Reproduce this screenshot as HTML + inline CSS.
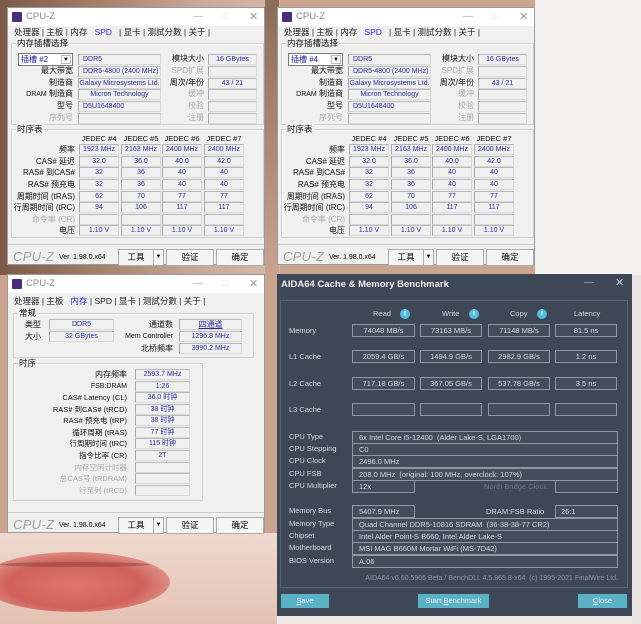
<!DOCTYPE html>
<html><head><meta charset="utf-8">
<style>
*{margin:0;padding:0;box-sizing:border-box}
body{width:641px;height:624px;position:relative;overflow:hidden;background:#c9a48f;font-family:"Liberation Sans","Noto Sans CJK SC",sans-serif}
.a{position:absolute;white-space:nowrap}
.w{position:absolute;background:#f0f0f0;border:1px solid #9a9a9a;width:258px;height:258px;font-size:8px;color:#000}
.tb{position:absolute;left:0;top:0;width:100%;height:18px;background:#fff}
.ic{position:absolute;left:4px;top:4px;width:10px;height:10px;background:#4a2c7c;border-radius:1px}
.tt{left:18px;top:3px;font-size:9.5px;color:#888}
.tab{top:18px;font-size:8.5px;line-height:12px;color:#222}
.g{position:absolute;border:1px solid #cfcfcf;box-shadow:1px 1px 0 #fff inset}
.gl{font-size:8.5px;line-height:11px;background:#f0f0f0;padding:0 1px;color:#111}
.lb{text-align:right;font-size:8px;line-height:11px;color:#111;overflow:hidden}
.gr{color:#aaa}
.bx{position:absolute;height:11px;background:#f0f0f0;border:1px solid #d8d8d8;border-left-color:#a8a8a8;border-top-color:#b8b8b8;font-size:7px;line-height:9px;color:#2a2a9c;text-align:center;white-space:nowrap;overflow:hidden}
.bl{text-align:left;padding-left:4px}
.hd{font-size:7.5px;text-align:center;width:40px;color:#111}
.cz{font-size:13px;font-style:italic;color:#a0a0a0;letter-spacing:0.3px}
.btn{position:absolute;top:241px;height:17px;border:1px solid #adadad;background:#f5f5f5;font-size:8.5px;text-align:center;line-height:15px}
.ad{position:absolute;left:277px;top:274px;width:355px;height:342px;background:#3d4756;color:#d6dbe2;font-size:7.5px}
.ab{position:absolute;height:13px;border:1px solid #8e97a4;background:#434d5c;text-align:center;line-height:11px;font-size:7.5px;color:#d6dbe2;white-space:nowrap}
.ar{position:absolute;left:75px;width:266px;height:13px;border:1px solid #8e97a4;background:#434d5c;line-height:11px;padding-left:6px;font-size:7.5px;white-space:nowrap}
.al{position:absolute;left:12px;font-size:7.5px;color:#d6dbe2;white-space:nowrap}
.ib{position:absolute;width:10px;height:10px;border-radius:50%;background:#55bedc;color:#fff;font-size:7px;text-align:center;line-height:10px;font-weight:bold}
.abtn{position:absolute;top:320px;height:14px;background:#5bb2c6;color:#eef;font-size:7.5px;text-align:center;line-height:14px}
</style></head><body>
<div class="a" style="left:0;top:0;width:280px;height:275px;background:linear-gradient(90deg,#7a5a46,#a88670 40%,#c8a898 70%,#d7b8a6)"></div>
<div class="a" style="left:535px;top:0;width:106px;height:275px;background:#f3f1f0"></div>
<div class="a" style="left:265px;top:0;width:14px;height:275px;background:linear-gradient(#8b6d5a,#c9a390)"></div>
<div class="a" style="left:0;top:533px;width:277px;height:91px;background:linear-gradient(#efd9cf,#e4c2b2)"></div>
<div class="a" style="left:-20px;top:552px;width:190px;height:60px;border-radius:50%;background:radial-gradient(ellipse at 50% 55%,#e0766c,#d0615a 50%,#e3a094 80%,transparent 100%)"></div>
<div class="a" style="left:0;top:562px;width:150px;height:5px;background:#8a4040;border-radius:50%;opacity:.5"></div>
<div class="a" style="left:632px;top:275px;width:9px;height:349px;background:#e9e4e2"></div>
<div class="a" style="left:277px;top:616px;width:355px;height:8px;background:#efe9e6"></div>

<!-- CPU-Z window 1 -->
<div class="w" style="left:7px;top:7px">
<div class="tb"></div><div class="ic"></div><div class="a tt">CPU-Z</div>
<div class="a" style="left:185px;top:3px;color:#aaa;font-size:10px">—</div><div class="a" style="left:214px;top:3px;color:#ddd;font-size:10px">□</div><div class="a" style="left:241px;top:2px;color:#999;font-size:11px">✕</div>
<div class="a tab" style="left:6px">处理器 | 主板 | 内存 &nbsp;&nbsp;<span style="color:#2a2ad0">SPD</span>&nbsp;&nbsp; | 显卡 | 测試分數 | 关于 |</div>
<div class="g" style="left:3px;top:35px;width:253px;height:82px"></div><div class="a gl" style="left:8px;top:30px">内存插槽选择</div>
<div class="a" style="left:10px;top:45px;width:55px;height:13px;background:#fff;border:1px solid #7a7a7a;font-size:8px;line-height:11px;padding-left:2px;color:#1a1a9a">插槽 #2<span style="position:absolute;right:1px;top:1px;width:10px;height:9px;border:1px solid #bbb;font-size:6px;text-align:center;line-height:8px;color:#000">▼</span></div>
<div class="a lb" style="left:0;width:65px;top:57px">最大带宽</div>
<div class="a lb" style="left:0;width:65px;top:69px">制造商</div>
<div class="a lb" style="left:0;width:65px;top:80px"><span style="font-size:7px">DRAM</span> 制造商</div>
<div class="a lb" style="left:0;width:65px;top:92px">型号</div>
<div class="a lb gr" style="left:0;width:65px;top:104px">序列号</div>
<div class="bx bl" style="left:70px;width:83px;top:46px">DDR5</div>
<div class="bx bl" style="left:70px;width:83px;top:58px">DDR5-4800 (2400 MHz)</div>
<div class="bx" style="left:70px;width:83px;top:70px">Galaxy Microsystems Ltd.</div>
<div class="bx" style="left:70px;width:83px;top:81px">Micron Technology</div>
<div class="bx bl" style="left:70px;width:83px;top:93px">D5U1648400</div>
<div class="bx" style="left:70px;width:83px;top:105px"></div>
<div class="a lb" style="left:140px;width:56px;top:45px">模块大小</div>
<div class="a lb gr" style="left:140px;width:56px;top:57px">SPD扩展</div>
<div class="a lb" style="left:140px;width:56px;top:69px">周次/年份</div>
<div class="a lb gr" style="left:140px;width:56px;top:80px">缓冲</div>
<div class="a lb gr" style="left:140px;width:56px;top:92px">校验</div>
<div class="a lb gr" style="left:140px;width:56px;top:104px">注册</div>
<div class="bx" style="left:200px;width:49px;top:46px">16 GBytes</div>
<div class="bx" style="left:200px;width:49px;top:58px"></div>
<div class="bx" style="left:200px;width:49px;top:70px">43 / 21</div>
<div class="bx" style="left:200px;width:49px;top:81px"></div>
<div class="bx" style="left:200px;width:49px;top:93px"></div>
<div class="bx" style="left:200px;width:49px;top:105px"></div>
<div class="g" style="left:3px;top:121px;width:253px;height:109px"></div><div class="a gl" style="left:8px;top:116px">时序表</div>
<div class="a hd" style="left:71px;top:126px">JEDEC #4</div><div class="a hd" style="left:113px;top:126px">JEDEC #5</div><div class="a hd" style="left:154px;top:126px">JEDEC #6</div><div class="a hd" style="left:196px;top:126px">JEDEC #7</div>
<div class="a lb" style="left:0;width:67px;top:136px">频率</div>
<div class="a lb" style="left:0;width:67px;top:148px">CAS# 延迟</div>
<div class="a lb" style="left:0;width:67px;top:159px">RAS# 到CAS#</div>
<div class="a lb" style="left:0;width:67px;top:171px">RAS# 预充电</div>
<div class="a lb" style="left:0;width:67px;top:183px">周期时间 (tRAS)</div>
<div class="a lb" style="left:0;width:67px;top:194px">行周期时间 (tRC)</div>
<div class="a lb gr" style="left:0;width:67px;top:206px">命令率 (CR)</div>
<div class="a lb" style="left:0;width:67px;top:217px">电压</div>
<div class="bx" style="left:71px;width:40px;top:136px">1923 MHz</div><div class="bx" style="left:113px;width:40px;top:136px">2163 MHz</div><div class="bx" style="left:154px;width:40px;top:136px">2400 MHz</div><div class="bx" style="left:196px;width:40px;top:136px">2400 MHz</div>
<div class="bx" style="left:71px;width:40px;top:148px">32.0</div><div class="bx" style="left:113px;width:40px;top:148px">36.0</div><div class="bx" style="left:154px;width:40px;top:148px">40.0</div><div class="bx" style="left:196px;width:40px;top:148px">42.0</div>
<div class="bx" style="left:71px;width:40px;top:159px">32</div><div class="bx" style="left:113px;width:40px;top:159px">36</div><div class="bx" style="left:154px;width:40px;top:159px">40</div><div class="bx" style="left:196px;width:40px;top:159px">40</div>
<div class="bx" style="left:71px;width:40px;top:171px">32</div><div class="bx" style="left:113px;width:40px;top:171px">36</div><div class="bx" style="left:154px;width:40px;top:171px">40</div><div class="bx" style="left:196px;width:40px;top:171px">40</div>
<div class="bx" style="left:71px;width:40px;top:183px">62</div><div class="bx" style="left:113px;width:40px;top:183px">70</div><div class="bx" style="left:154px;width:40px;top:183px">77</div><div class="bx" style="left:196px;width:40px;top:183px">77</div>
<div class="bx" style="left:71px;width:40px;top:194px">94</div><div class="bx" style="left:113px;width:40px;top:194px">106</div><div class="bx" style="left:154px;width:40px;top:194px">117</div><div class="bx" style="left:196px;width:40px;top:194px">117</div>
<div class="bx" style="left:71px;width:40px;top:206px"></div><div class="bx" style="left:113px;width:40px;top:206px"></div><div class="bx" style="left:154px;width:40px;top:206px"></div><div class="bx" style="left:196px;width:40px;top:206px"></div>
<div class="bx" style="left:71px;width:40px;top:217px">1.10 V</div><div class="bx" style="left:113px;width:40px;top:217px">1.10 V</div><div class="bx" style="left:154px;width:40px;top:217px">1.10 V</div><div class="bx" style="left:196px;width:40px;top:217px">1.10 V</div>
<div class="a" style="left:0;top:236px;width:256px;height:1px;background:#ccc"></div>
<div class="a cz" style="left:5px;top:241px">CPU-Z</div><div class="a" style="left:51px;top:246px;font-size:7px">Ver. 1.98.0.x64</div>
<div class="btn" style="left:110px;width:36px">工具</div><div class="btn" style="left:145px;width:11px;font-size:6px">▼</div>
<div class="btn" style="left:158px;width:48px">验证</div><div class="btn" style="left:208px;width:48px">确定</div>
</div>

<!-- CPU-Z window 2 -->
<div class="w" style="left:277px;top:7px">
<div class="tb"></div><div class="ic"></div><div class="a tt">CPU-Z</div>
<div class="a" style="left:185px;top:3px;color:#aaa;font-size:10px">—</div><div class="a" style="left:214px;top:3px;color:#ddd;font-size:10px">□</div><div class="a" style="left:241px;top:2px;color:#999;font-size:11px">✕</div>
<div class="a tab" style="left:6px">处理器 | 主板 | 内存 &nbsp;&nbsp;<span style="color:#2a2ad0">SPD</span>&nbsp;&nbsp; | 显卡 | 测試分數 | 关于 |</div>
<div class="g" style="left:3px;top:35px;width:253px;height:82px"></div><div class="a gl" style="left:8px;top:30px">内存插槽选择</div>
<div class="a" style="left:10px;top:45px;width:55px;height:13px;background:#fff;border:1px solid #7a7a7a;font-size:8px;line-height:11px;padding-left:2px;color:#1a1a9a">插槽 #4<span style="position:absolute;right:1px;top:1px;width:10px;height:9px;border:1px solid #bbb;font-size:6px;text-align:center;line-height:8px;color:#000">▼</span></div>
<div class="a lb" style="left:0;width:65px;top:57px">最大带宽</div>
<div class="a lb" style="left:0;width:65px;top:69px">制造商</div>
<div class="a lb" style="left:0;width:65px;top:80px"><span style="font-size:7px">DRAM</span> 制造商</div>
<div class="a lb" style="left:0;width:65px;top:92px">型号</div>
<div class="a lb gr" style="left:0;width:65px;top:104px">序列号</div>
<div class="bx bl" style="left:70px;width:83px;top:46px">DDR5</div>
<div class="bx bl" style="left:70px;width:83px;top:58px">DDR5-4800 (2400 MHz)</div>
<div class="bx" style="left:70px;width:83px;top:70px">Galaxy Microsystems Ltd.</div>
<div class="bx" style="left:70px;width:83px;top:81px">Micron Technology</div>
<div class="bx bl" style="left:70px;width:83px;top:93px">D5U1648400</div>
<div class="bx" style="left:70px;width:83px;top:105px"></div>
<div class="a lb" style="left:140px;width:56px;top:45px">模块大小</div>
<div class="a lb gr" style="left:140px;width:56px;top:57px">SPD扩展</div>
<div class="a lb" style="left:140px;width:56px;top:69px">周次/年份</div>
<div class="a lb gr" style="left:140px;width:56px;top:80px">缓冲</div>
<div class="a lb gr" style="left:140px;width:56px;top:92px">校验</div>
<div class="a lb gr" style="left:140px;width:56px;top:104px">注册</div>
<div class="bx" style="left:200px;width:49px;top:46px">16 GBytes</div>
<div class="bx" style="left:200px;width:49px;top:58px"></div>
<div class="bx" style="left:200px;width:49px;top:70px">43 / 21</div>
<div class="bx" style="left:200px;width:49px;top:81px"></div>
<div class="bx" style="left:200px;width:49px;top:93px"></div>
<div class="bx" style="left:200px;width:49px;top:105px"></div>
<div class="g" style="left:3px;top:121px;width:253px;height:109px"></div><div class="a gl" style="left:8px;top:116px">时序表</div>
<div class="a hd" style="left:71px;top:126px">JEDEC #4</div><div class="a hd" style="left:113px;top:126px">JEDEC #5</div><div class="a hd" style="left:154px;top:126px">JEDEC #6</div><div class="a hd" style="left:196px;top:126px">JEDEC #7</div>
<div class="a lb" style="left:0;width:67px;top:136px">频率</div>
<div class="a lb" style="left:0;width:67px;top:148px">CAS# 延迟</div>
<div class="a lb" style="left:0;width:67px;top:159px">RAS# 到CAS#</div>
<div class="a lb" style="left:0;width:67px;top:171px">RAS# 预充电</div>
<div class="a lb" style="left:0;width:67px;top:183px">周期时间 (tRAS)</div>
<div class="a lb" style="left:0;width:67px;top:194px">行周期时间 (tRC)</div>
<div class="a lb gr" style="left:0;width:67px;top:206px">命令率 (CR)</div>
<div class="a lb" style="left:0;width:67px;top:217px">电压</div>
<div class="bx" style="left:71px;width:40px;top:136px">1923 MHz</div><div class="bx" style="left:113px;width:40px;top:136px">2163 MHz</div><div class="bx" style="left:154px;width:40px;top:136px">2400 MHz</div><div class="bx" style="left:196px;width:40px;top:136px">2400 MHz</div>
<div class="bx" style="left:71px;width:40px;top:148px">32.0</div><div class="bx" style="left:113px;width:40px;top:148px">36.0</div><div class="bx" style="left:154px;width:40px;top:148px">40.0</div><div class="bx" style="left:196px;width:40px;top:148px">42.0</div>
<div class="bx" style="left:71px;width:40px;top:159px">32</div><div class="bx" style="left:113px;width:40px;top:159px">36</div><div class="bx" style="left:154px;width:40px;top:159px">40</div><div class="bx" style="left:196px;width:40px;top:159px">40</div>
<div class="bx" style="left:71px;width:40px;top:171px">32</div><div class="bx" style="left:113px;width:40px;top:171px">36</div><div class="bx" style="left:154px;width:40px;top:171px">40</div><div class="bx" style="left:196px;width:40px;top:171px">40</div>
<div class="bx" style="left:71px;width:40px;top:183px">62</div><div class="bx" style="left:113px;width:40px;top:183px">70</div><div class="bx" style="left:154px;width:40px;top:183px">77</div><div class="bx" style="left:196px;width:40px;top:183px">77</div>
<div class="bx" style="left:71px;width:40px;top:194px">94</div><div class="bx" style="left:113px;width:40px;top:194px">106</div><div class="bx" style="left:154px;width:40px;top:194px">117</div><div class="bx" style="left:196px;width:40px;top:194px">117</div>
<div class="bx" style="left:71px;width:40px;top:206px"></div><div class="bx" style="left:113px;width:40px;top:206px"></div><div class="bx" style="left:154px;width:40px;top:206px"></div><div class="bx" style="left:196px;width:40px;top:206px"></div>
<div class="bx" style="left:71px;width:40px;top:217px">1.10 V</div><div class="bx" style="left:113px;width:40px;top:217px">1.10 V</div><div class="bx" style="left:154px;width:40px;top:217px">1.10 V</div><div class="bx" style="left:196px;width:40px;top:217px">1.10 V</div>
<div class="a" style="left:0;top:236px;width:256px;height:1px;background:#ccc"></div>
<div class="a cz" style="left:5px;top:241px">CPU-Z</div><div class="a" style="left:51px;top:246px;font-size:7px">Ver. 1.98.0.x64</div>
<div class="btn" style="left:110px;width:36px">工具</div><div class="btn" style="left:145px;width:11px;font-size:6px">▼</div>
<div class="btn" style="left:158px;width:48px">验证</div><div class="btn" style="left:208px;width:48px">确定</div>
</div>

<!-- CPU-Z window 3 -->
<div class="w" style="left:7px;top:274px;height:259px">
<div class="tb"></div><div class="ic"></div><div class="a tt">CPU-Z</div>
<div class="a" style="left:185px;top:3px;color:#aaa;font-size:10px">—</div><div class="a" style="left:214px;top:3px;color:#ddd;font-size:10px">□</div><div class="a" style="left:241px;top:2px;color:#999;font-size:11px">✕</div>
<div class="a tab" style="left:6px;top:20px">处理器 | 主板 &nbsp; <span style="color:#2a2ad0">内存</span> | SPD | 显卡 | 测試分數 | 关于 |</div>
<div class="g" style="left:5px;top:38px;width:241px;height:45px"></div><div class="a gl" style="left:10px;top:33px">常规</div>
<div class="a lb" style="left:0;width:33px;top:44px">类型</div>
<div class="a lb" style="left:0;width:33px;top:56px">大小</div>
<div class="bx" style="left:41px;width:65px;top:44px">DDR5</div>
<div class="bx" style="left:41px;width:65px;top:56px">32 GBytes</div>
<div class="a lb" style="left:100px;width:65px;top:44px">通道数</div>
<div class="a lb" style="left:100px;width:65px;top:56px;font-size:7px">Mem Controller</div>
<div class="a lb" style="left:100px;width:65px;top:68px">北桥频率</div>
<div class="bx" style="left:171px;width:63px;top:44px;text-decoration:underline;font-size:8px">四通道</div>
<div class="bx" style="left:171px;width:63px;top:56px">1296.8 MHz</div>
<div class="bx" style="left:171px;width:63px;top:68px">3990.2 MHz</div>
<div class="g" style="left:5px;top:88px;width:190px;height:138px"></div><div class="a gl" style="left:10px;top:83px">时序</div>
<div class="a lb" style="left:0;width:119px;top:94px">内存频率</div>
<div class="a lb" style="left:0;width:119px;top:106px;font-size:7px">FSB:DRAM</div>
<div class="a lb" style="left:0;width:119px;top:117px;font-size:7.5px">CAS# Latency (CL)</div>
<div class="a lb" style="left:0;width:119px;top:129px;font-size:7.5px">RAS# 到CAS# (tRCD)</div>
<div class="a lb" style="left:0;width:119px;top:140px;font-size:7.5px">RAS# 预充电 (tRP)</div>
<div class="a lb" style="left:0;width:119px;top:152px;font-size:7.5px">循环周期 (tRAS)</div>
<div class="a lb" style="left:0;width:119px;top:163px;font-size:7.5px">行周期时间 (tRC)</div>
<div class="a lb" style="left:0;width:119px;top:175px;font-size:7.5px">指令比率 (CR)</div>
<div class="a lb gr" style="left:0;width:119px;top:187px;font-size:7.5px">内存空闲计时器</div>
<div class="a lb gr" style="left:0;width:119px;top:198px;font-size:7.5px">总CAS号 (tRDRAM)</div>
<div class="a lb gr" style="left:0;width:119px;top:210px;font-size:7.5px">行至列 (tRCD)</div>
<div class="bx" style="left:127px;width:55px;top:94px">2593.7 MHz</div>
<div class="bx" style="left:127px;width:55px;top:106px">1:26</div>
<div class="bx" style="left:127px;width:55px;top:117px">36.0 时钟</div>
<div class="bx" style="left:127px;width:55px;top:129px">38 时钟</div>
<div class="bx" style="left:127px;width:55px;top:140px">38 时钟</div>
<div class="bx" style="left:127px;width:55px;top:152px">77 时钟</div>
<div class="bx" style="left:127px;width:55px;top:163px">115 时钟</div>
<div class="bx" style="left:127px;width:55px;top:175px">2T</div>
<div class="bx" style="left:127px;width:55px;top:187px"></div>
<div class="bx" style="left:127px;width:55px;top:198px"></div>
<div class="bx" style="left:127px;width:55px;top:210px"></div>
<div class="a" style="left:0;top:237px;width:256px;height:1px;background:#ccc"></div>
<div class="a cz" style="left:5px;top:242px">CPU-Z</div><div class="a" style="left:51px;top:247px;font-size:7px">Ver. 1.98.0.x64</div>
<div class="btn" style="left:110px;width:36px;top:242px">工具</div><div class="btn" style="left:145px;width:11px;font-size:6px;top:242px">▼</div>
<div class="btn" style="left:158px;width:48px;top:242px">验证</div><div class="btn" style="left:208px;width:48px;top:242px">确定</div>
</div>

<!-- AIDA64 -->
<div class="ad">
<div class="a" style="left:4px;top:5px;font-size:9.5px;font-weight:bold;color:#eef1f5">AIDA64 Cache &amp; Memory Benchmark</div>
<div class="a" style="left:307px;top:3px;font-size:10px;color:#aab">—</div><div class="a" style="left:338px;top:2px;font-size:11px;color:#ccd">✕</div>
<div class="a" style="left:3px;top:26px;width:348px;height:288px;border:1px solid #5b6574"></div>
<div class="a" style="left:96px;top:35px">Read</div><div class="ib" style="left:123px;top:35px">i</div>
<div class="a" style="left:165px;top:35px">Write</div><div class="ib" style="left:192px;top:35px">i</div>
<div class="a" style="left:233px;top:35px">Copy</div><div class="ib" style="left:260px;top:35px">i</div>
<div class="a" style="left:297px;top:35px">Latency</div>
<div class="al" style="top:52px">Memory</div>
<div class="ab" style="left:75px;width:63px;top:50px">74048 MB/s</div><div class="ab" style="left:143px;width:62px;top:50px">73163 MB/s</div><div class="ab" style="left:211px;width:62px;top:50px">71148 MB/s</div><div class="ab" style="left:278px;width:62px;top:50px">81.5 ns</div>
<div class="al" style="top:78px">L1 Cache</div>
<div class="ab" style="left:75px;width:63px;top:76px">2059.4 GB/s</div><div class="ab" style="left:143px;width:62px;top:76px">1494.9 GB/s</div><div class="ab" style="left:211px;width:62px;top:76px">2982.9 GB/s</div><div class="ab" style="left:278px;width:62px;top:76px">1.2 ns</div>
<div class="al" style="top:105px">L2 Cache</div>
<div class="ab" style="left:75px;width:63px;top:103px">717.18 GB/s</div><div class="ab" style="left:143px;width:62px;top:103px">367.05 GB/s</div><div class="ab" style="left:211px;width:62px;top:103px">537.78 GB/s</div><div class="ab" style="left:278px;width:62px;top:103px">3.5 ns</div>
<div class="al" style="top:131px">L3 Cache</div>
<div class="ab" style="left:75px;width:63px;top:129px"></div><div class="ab" style="left:143px;width:62px;top:129px"></div><div class="ab" style="left:211px;width:62px;top:129px"></div><div class="ab" style="left:278px;width:62px;top:129px"></div>
<div class="al" style="top:158px">CPU Type</div><div class="ar" style="top:157px">6x Intel Core i5-12400 &nbsp;(Alder Lake-S, LGA1700)</div>
<div class="al" style="top:170px">CPU Stepping</div><div class="ar" style="top:169px">C0</div>
<div class="al" style="top:182px">CPU Clock</div><div class="ar" style="top:181px">2496.0 MHz</div>
<div class="al" style="top:195px">CPU FSB</div><div class="ar" style="top:194px">208.0 MHz &nbsp;(original: 100 MHz, overclock: 107%)</div>
<div class="al" style="top:207px">CPU Multiplier</div><div class="ar" style="top:206px;width:63px">12x</div>
<div class="a" style="left:207px;top:208px;color:#6d7888">North Bridge Clock</div><div class="ab" style="left:278px;width:63px;top:206px"></div>
<div class="al" style="top:232px">Memory Bus</div><div class="ar" style="top:231px;width:63px">5407.9 MHz</div>
<div class="a" style="left:209px;top:233px">DRAM:FSB Ratio</div><div class="ab" style="left:278px;width:63px;top:231px;text-align:left;padding-left:5px">26:1</div>
<div class="al" style="top:245px">Memory Type</div><div class="ar" style="top:244px">Quad Channel DDR5-10816 SDRAM &nbsp;(36-38-38-77 CR2)</div>
<div class="al" style="top:257px">Chipset</div><div class="ar" style="top:256px">Intel Alder Point-S B660, Intel Alder Lake-S</div>
<div class="al" style="top:269px">Motherboard</div><div class="ar" style="top:268px">MSI MAG B660M Mortar WiFi (MS-7D42)</div>
<div class="al" style="top:282px">BIOS Version</div><div class="ar" style="top:281px">A.06</div>
<div class="a" style="right:14px;top:301px;font-size:7px;color:#8c96a4">AIDA64 v6.60.5906 Beta / BenchDLL 4.5.865.8-x64 &nbsp;(c) 1995-2021 FinalWire Ltd.</div>
<div class="abtn" style="left:4px;width:48px"><u>S</u>ave</div>
<div class="abtn" style="left:141px;width:71px">Start <u>B</u>enchmark</div>
<div class="abtn" style="left:301px;width:49px"><u>C</u>lose</div>
</div>
</body></html>
